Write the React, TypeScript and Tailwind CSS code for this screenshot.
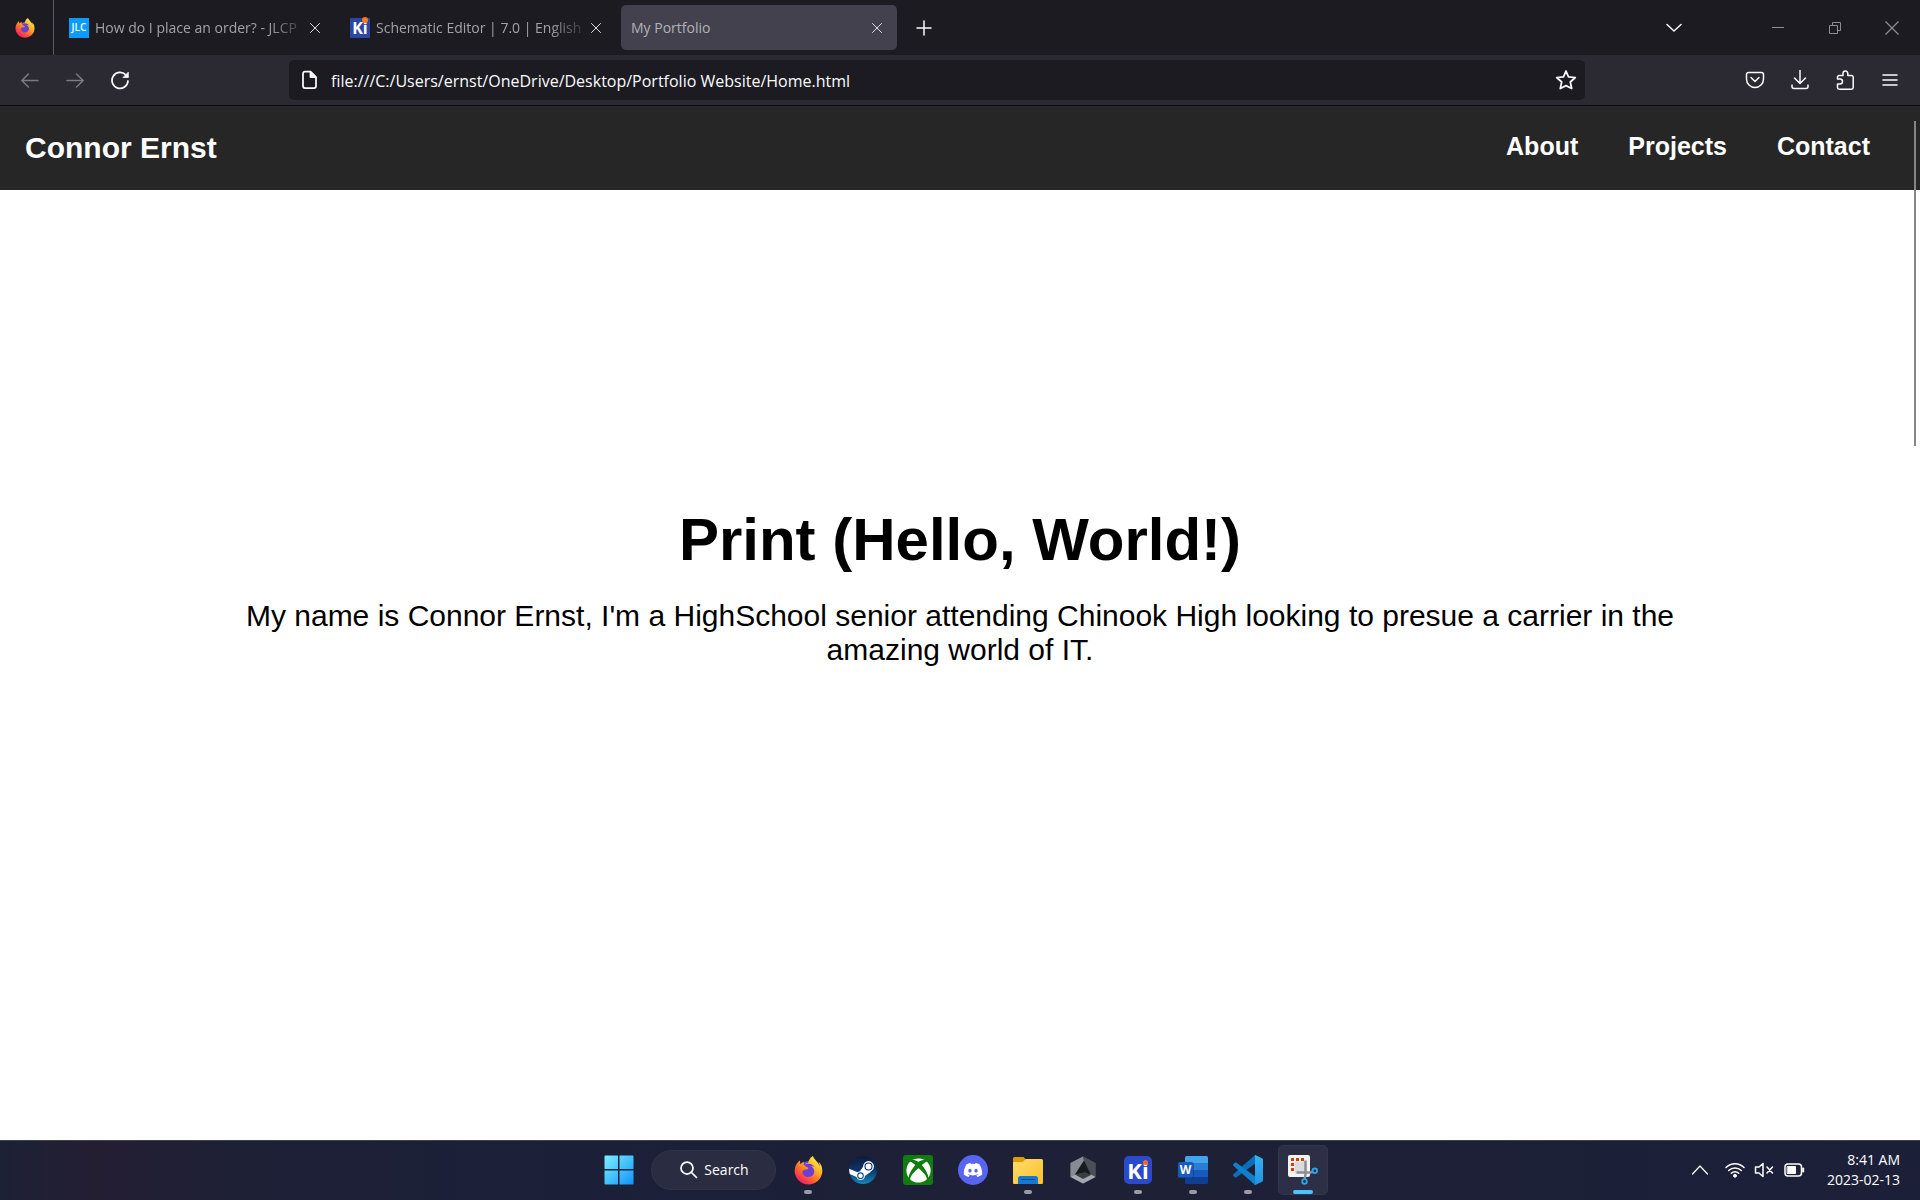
import type { ReactNode } from "react";
import { FaDiscord, FaFirefoxBrowser, FaXbox } from "react-icons/fa";

function Gradients() {
  return (
    <svg width="0" height="0" className="absolute" aria-hidden="true">
      <defs>
        <linearGradient id="flame" x1="0.85" y1="0.05" x2="0.2" y2="0.95">
          <stop offset="0" stopColor="#fff44f" />
          <stop offset="0.35" stopColor="#ffb42a" />
          <stop offset="0.65" stopColor="#ff6a2b" />
          <stop offset="1" stopColor="#f5156c" />
        </linearGradient>
        <linearGradient id="steamBlue" x1="0" y1="0" x2="0" y2="1">
          <stop offset="0" stopColor="#101a3a" />
          <stop offset="0.5" stopColor="#0b3568" />
          <stop offset="1" stopColor="#1387b8" />
        </linearGradient>
        <linearGradient id="winBlue" x1="0" y1="0" x2="1" y2="1">
          <stop offset="0" stopColor="#7bf0ff" />
          <stop offset="1" stopColor="#0f93fb" />
        </linearGradient>
        <linearGradient id="folderYellow" x1="0" y1="0" x2="1" y2="1">
          <stop offset="0" stopColor="#ffdc6b" />
          <stop offset="1" stopColor="#fbc02e" />
        </linearGradient>
        <linearGradient id="codeBlue" x1="0" y1="0" x2="0" y2="1">
          <stop offset="0" stopColor="#35b3f5" />
          <stop offset="1" stopColor="#1c93e3" />
        </linearGradient>
      </defs>
    </svg>
  );
}

function Firefox({ size }: { size: number }) {
  return (
    <span className="relative grid place-items-center">
      <span className="absolute size-3/5 rounded-full bg-[#6b3fd6]" />
      <FaFirefoxBrowser size={size} fill="url(#flame)" className="relative" />
    </span>
  );
}

function Line({ size = 20, width = 1.5, children }: { size?: number; width?: number; children: ReactNode }) {
  return (
    <svg
      width={size}
      height={size}
      viewBox={`0 0 ${size} ${size}`}
      fill="none"
      stroke="currentColor"
      strokeWidth={width}
      strokeLinecap="round"
      strokeLinejoin="round"
      aria-hidden="true"
    >
      {children}
    </svg>
  );
}

function Tab({ icon, title, active }: { icon?: ReactNode; title: string; active?: boolean }) {
  return (
    <div
      className={
        active
          ? "flex h-[45px] w-[276px] items-center rounded-[5px] bg-[#42414d] pl-2.5 pr-3.5 text-[#b2b1b8]"
          : "flex h-[45px] w-[276px] items-center pl-2.5 pr-3.5 text-[#a3a2a8]"
      }
    >
      <button className="flex min-w-0 flex-1 items-center gap-1.5 text-left text-sm">
        {icon}
        <span
          className={
            active
              ? "whitespace-nowrap"
              : "min-w-0 flex-1 overflow-hidden whitespace-nowrap [mask-image:linear-gradient(to_right,black_calc(100%-40px),transparent)]"
          }
        >
          {title}
        </span>
      </button>
      <button aria-label={`Close ${title}`} className="text-[#e0e0e4]">
        <Line size={12} width={1}>
          <path d="M1.5 1.5l9 9M10.5 1.5l-9 9" />
        </Line>
      </button>
    </div>
  );
}

function IconButton({ label, className, children }: { label: string; className?: string; children: ReactNode }) {
  return (
    <button aria-label={label} className={`grid h-10 w-[45px] place-items-center ${className ?? "text-[#fbfbfe]"}`}>
      {children}
    </button>
  );
}

function WindowButton({ label, children }: { label: string; children: ReactNode }) {
  return (
    <button aria-label={label} className="grid h-full w-[57px] place-items-center text-[#8e8d93]">
      {children}
    </button>
  );
}

function TabStrip() {
  return (
    <div className="flex h-[55px] items-center bg-[#1c1b22]">
      <button aria-label="Firefox View" className="grid h-full w-[54px] place-items-center border-r border-[#5b5b66] pr-1">
        <Firefox size={20} />
      </button>
      <div className="ml-[5px] flex gap-[5px]">
        <Tab
          title="How do I place an order? - JLCP"
          icon={
            <span className="grid size-5 shrink-0 place-items-center bg-[#0a9bff] text-[10px] font-semibold text-white">
              JLC
            </span>
          }
        />
        <Tab
          title="Schematic Editor | 7.0 | English"
          icon={
            <span className="relative grid size-5 shrink-0 place-items-center rounded-[1px] bg-[#2c46a5] text-base font-bold leading-5 text-white">
              Ki
              <span className="absolute -top-px right-0.5 size-1.5 rounded-full bg-[#f77c13]" />
            </span>
          }
        />
        <Tab title="My Portfolio" active />
      </div>
      <button aria-label="New tab" className="ml-3 grid h-10 w-[30px] place-items-center text-[#fbfbfe]">
        <Line size={16} width={1.5}>
          <path d="M8 1v14M1 8h14" />
        </Line>
      </button>
      <div className="ml-auto flex h-full items-center">
        <button aria-label="List all tabs" className="mr-[53px] grid h-10 w-[45px] place-items-center text-[#fbfbfe]">
          <Line size={16} width={1.5}>
            <path d="M1 4.500L8 11l7-6.500" />
          </Line>
        </button>
        <WindowButton label="Minimize">
          <svg width="12" height="12" aria-hidden="true">
            <path d="M0 5.5h12" stroke="currentColor" />
          </svg>
        </WindowButton>
        <WindowButton label="Restore">
          <svg width="12" height="12" fill="none" stroke="currentColor" aria-hidden="true">
            <path d="M.5 3.5h8v8h-8zM3.5 3.5v-3h8v8h-3" />
          </svg>
        </WindowButton>
        <WindowButton label="Close">
          <svg width="14" height="14" fill="none" stroke="currentColor" strokeWidth="1.2" aria-hidden="true">
            <path d="M.5 .5l13 13M13.5 .5l-13 13" />
          </svg>
        </WindowButton>
      </div>
    </div>
  );
}

function Toolbar() {
  return (
    <div className="flex h-[51px] items-center border-b border-[#0c0c0d] bg-[#2b2a33] pl-[7px] pr-2">
      <IconButton label="Back" className="text-[#7b7a82]">
        <Line>
          <path d="M18 10.500H2M8.500 4L1.800 10.500l6.700 6.500" />
        </Line>
      </IconButton>
      <IconButton label="Forward" className="text-[#7b7a82]">
        <Line>
          <path d="M2 10.500h16M11.500 4l6.700 6.500-6.700 6.500" />
        </Line>
      </IconButton>
      <IconButton label="Reload">
        <Line width={1.75}>
          <path d="M18 11a8 8 0 1 1-2.300-6.200l1.600 1.500" />
          <path d="M18.300 2.500v5h-5z" fill="currentColor" strokeWidth="0.8" />
        </Line>
      </IconButton>
      <div className="mx-[147px] flex h-10 min-w-0 flex-1 items-center rounded-[5px] bg-[#1c1b22] pl-[11px] pr-2 text-[#fbfbfe]">
        <Line width={1.75}>
          <path d="M5 1.500h5.500l5.500 5.500v9a2 2 0 0 1-2 2H5a2 2 0 0 1-2-2V3.500a2 2 0 0 1 2-2z" />
          <path d="M10.500 2v5h5z" fill="currentColor" />
        </Line>
        <input
          aria-label="Address"
          defaultValue="file:///C:/Users/ernst/OneDrive/Desktop/Portfolio Website/Home.html"
          className="ml-[11px] min-w-0 flex-1 bg-transparent pt-0.5 text-base outline-none"
        />
        <button aria-label="Bookmark this page">
          <Line size={22} width={1.75}>
            <path d="M11 2l2.500 5.800 6.800.7-5 4.500 1.400 6.500L11 16.600l-5.700 2.900 1.400-6.500-5-4.500 6.800-.7z" />
          </Line>
        </button>
      </div>
      <IconButton label="Save to Pocket">
        <Line width={1.5}>
          <path d="M3.500 2.500h13a2 2 0 0 1 2 2V9a8.500 8.500 0 0 1-17 0V4.500a2 2 0 0 1 2-2zM6 7.500l4 4 4-4" />
        </Line>
      </IconButton>
      <IconButton label="Downloads">
        <Line width={1.5}>
          <path d="M10 .5v13M4.500 8l5.500 5.500L15.500 8M2 15v1.500A2 2 0 0 0 4 18.500h12a2 2 0 0 0 2-2V15" />
        </Line>
      </IconButton>
      <IconButton label="Extensions">
        <Line width={1.5}>
          <path d="M2.500 9V7.200a1.700 1.700 0 0 1 1.700-1.700H8V3.400a2.400 2.400 0 0 1 4.800 0v2.100h3.700a1.700 1.700 0 0 1 1.700 1.700v10.300a1.700 1.700 0 0 1-1.700 1.700H4.200a1.700 1.700 0 0 1-1.700-1.700V14H5a2.500 2.500 0 0 0 0-5z" />
        </Line>
      </IconButton>
      <IconButton label="Menu">
        <Line size={16} width={1.5}>
          <path d="M1 3h14M1 8h14M1 13h14" />
        </Line>
      </IconButton>
    </div>
  );
}

function Page() {
  return (
    <div className="relative flex flex-1 flex-col bg-white font-['Liberation_Sans',Arial,sans-serif] text-black">
      <header className="flex items-start justify-between bg-[#262626] p-[25px] font-bold text-white">
        <a href="#home" className="text-[30px] leading-[34px]">
          Connor Ernst
        </a>
        <nav className="flex gap-[50px] pr-[25px] text-[25px] leading-[30px]">
          <a href="#about">About</a>
          <a href="#projects">Projects</a>
          <a href="#contact">Contact</a>
        </nav>
      </header>
      <main className="px-[10%] pt-[316px] text-center">
        <h1 className="text-[60px] font-bold leading-[68px]">Print (Hello, World!)</h1>
        <p className="mt-[25px] text-[30px] leading-[34px]">
          My name is Connor Ernst, I'm a HighSchool senior attending Chinook High looking to presue a carrier in the
          amazing world of IT.
        </p>
      </main>
      <div className="absolute right-1 top-[15px] h-[325px] w-0.5 bg-[#858585]" />
    </div>
  );
}

function TaskButton({
  label,
  running,
  active,
  children,
}: {
  label: string;
  running?: boolean;
  active?: boolean;
  children: ReactNode;
}) {
  return (
    <button
      aria-label={label}
      className={
        active
          ? "relative grid size-[50px] place-items-center rounded-[5px] border border-[#34364c] bg-[#2c2f46]"
          : "relative grid size-[50px] place-items-center"
      }
    >
      {children}
      {running && <span className="absolute bottom-px left-[21px] h-1 w-2 rounded-full bg-[#9a9ba6]" />}
      {active && <span className="absolute bottom-0 left-3.5 h-1 w-5 rounded-full bg-[#4cc2ff]" />}
    </button>
  );
}

function Taskbar() {
  return (
    <footer className="grid h-[60px] grid-cols-[1fr_auto_1fr] items-center border-t border-[#3c4048] bg-[linear-gradient(to_right,#1d2136,#241e33_5%,#1e2036_12%,#1b2038_30%,#1e2036_60%,#1b2038)] pb-px text-white">
      <div />
      <div className="flex items-center gap-[5px] pl-0.5">
        <TaskButton label="Start">
          <svg width="30" height="30" viewBox="0 0 30 30" aria-hidden="true">
            <path d="M.5 1.500a1 1 0 0 1 1-1H14V14H.5zM15.500 .5h13a1 1 0 0 1 1 1V14h-14zM.5 15.500H14v14H1.500a1 1 0 0 1-1-1zM15.500 15.500h14v13a1 1 0 0 1-1 1h-13z" fill="url(#winBlue)" />
          </svg>
        </TaskButton>
        <button className="mx-0.5 flex h-10 w-[125px] items-center justify-center gap-1.5 rounded-full border border-[#303349] bg-[#2a2d42] text-sm">
          <Line width={1.75}>
            <circle cx="9" cy="8" r="6" />
            <path d="M13.500 12.500l5 5" />
          </Line>
          Search
        </button>
        <TaskButton label="Firefox" running>
          <Firefox size={29} />
        </TaskButton>
        <TaskButton label="Steam">
          <svg width="28" height="28" viewBox="0 0 28 28" aria-hidden="true">
            <circle cx="14" cy="14" r="14" fill="url(#steamBlue)" />
            <path d="M.2 12.800L8.500 16.200a4 4 0 0 1 2.300-.7l3.800-5.400 7.300 5.600-6 4.200a4.300 4.300 0 0 1-8.400 1L.8 18A14 14 0 0 1 .2 12.800z" fill="#fff" />
            <circle cx="19.500" cy="10.500" r="5.400" fill="#fff" />
            <circle cx="19.500" cy="10.500" r="3.500" fill="none" stroke="#0d2c58" strokeWidth="1.100" />
            <circle cx="11.500" cy="19.700" r="2.800" fill="none" stroke="#0e4f83" strokeWidth="1.100" />
          </svg>
        </TaskButton>
        <TaskButton label="Xbox">
          <span className="grid size-[30px] place-items-center rounded-[3px] bg-[#107c10]">
            <FaXbox size={25} fill="#fff" />
          </span>
        </TaskButton>
        <TaskButton label="Discord">
          <span className="grid size-[30px] place-items-center rounded-full bg-[#5865f2]">
            <FaDiscord size={20} fill="#fff" />
          </span>
        </TaskButton>
        <TaskButton label="File Explorer" running>
          <svg width="30" height="28" viewBox="0 0 30 28" aria-hidden="true">
            <path d="M0 2.500A1.500 1.500 0 0 1 1.500 1h9L13.500 4H28v6H0z" fill="#dd9a05" />
            <path d="M0 6h9.500l3.500-3h15.500A1.500 1.500 0 0 1 30 4.500V27a1 1 0 0 1-1 1H1a1 1 0 0 1-1-1z" fill="url(#folderYellow)" />
            <path d="M5 28v-5.500A2.500 2.500 0 0 1 7.500 20h15a2.500 2.500 0 0 1 2.500 2.500V28z" fill="#1479d0" />
            <path d="M8.500 23.500h13" stroke="#0b4a8c" strokeWidth="1.200" />
          </svg>
        </TaskButton>
        <TaskButton label="Armoury Crate">
          <svg width="28" height="28" viewBox="0 0 28 28" aria-hidden="true">
            <path d="M14 .5L26.500 7v14L14 27.500 1.500 21V7z" fill="#565b61" />
            <path d="M14 .5L1.500 7v14L6 18.500 15 4.500z" fill="#868c93" />
            <path d="M14 .5L26.500 7v14L22 19 15 4.500z" fill="#4a4f55" />
            <path d="M14 27.500L1.500 21 6 18.500h16l4.500 2.500z" fill="#a3a9af" />
            <path d="M15 4.500L22 19l-6-2.500L6 18.500z" fill="#171b20" />
            <path d="M6 18.500l10-2 6 2.500-8 4z" fill="#3a3f45" />
          </svg>
        </TaskButton>
        <TaskButton label="KiCad" running>
          <span className="relative grid size-7 place-items-center rounded-[5px] bg-[#2b4acb] text-[22px] font-bold leading-7">
            Ki
            <span className="absolute right-1 top-1 size-[5px] rounded-full bg-[#ff6a13]" />
          </span>
        </TaskButton>
        <TaskButton label="Word" running>
          <span className="relative grid place-items-center">
            <svg width="30" height="28" viewBox="0 0 30 28" aria-hidden="true">
              <path d="M7 1.500A1.500 1.500 0 0 1 8.500 0h20A1.500 1.500 0 0 1 30 1.500V7H7z" fill="#41a5ee" />
              <path d="M7 7h23v7H7z" fill="#2b7cd3" />
              <path d="M7 14h23v7H7z" fill="#185abd" />
              <path d="M7 21h23v5.500a1.500 1.500 0 0 1-1.500 1.500h-20A1.500 1.500 0 0 1 7 26.500z" fill="#103f91" />
              <rect x="1" y="6.500" width="15" height="16" rx="1.500" fill="#0b3a80" opacity="0.5" />
              <rect x="0" y="6" width="15" height="15.500" rx="1.500" fill="#185abd" />
            </svg>
            <span className="absolute left-0 top-1.5 w-[15px] text-center text-[12px] font-bold leading-4">W</span>
          </span>
        </TaskButton>
        <TaskButton label="Visual Studio Code" running>
          <svg width="30" height="30" viewBox="0 0 30 30" aria-hidden="true">
            <path d="M22 0l1.500 7.500L3.500 22.300a1.200 1.200 0 0 1-1.600 0L.4 20.900a1.200 1.200 0 0 1 0-1.700z" fill="#0a6fb8" />
            <path d="M22 30l1.500-7.500L3.500 7.700a1.200 1.200 0 0 0-1.600 0L.4 9.100a1.200 1.200 0 0 0 0 1.700z" fill="#0e80cc" />
            <path d="M22.200 0L29 3.200a1.800 1.800 0 0 1 1 1.600v20.400a1.800 1.800 0 0 1-1 1.600L22.200 30c-.8 0-.2-.9-.2-1.300V1.300C22 .9 21.400 0 22.200 0z" fill="url(#codeBlue)" />
          </svg>
        </TaskButton>
        <TaskButton label="Snipping Tool" active>
          <svg width="30" height="30" viewBox="0 0 30 30" aria-hidden="true">
            <rect x="0" y="0" width="22" height="22" rx="2" fill="#f3f3f3" />
            <rect x="6.500" y="6.500" width="12" height="12" rx="1" fill="#d9dbdd" />
            <path d="M3 4.500h14" stroke="#d83b01" strokeWidth="3" strokeDasharray="3 2" />
            <path d="M4.500 8v9" stroke="#d83b01" strokeWidth="3" strokeDasharray="3 2" />
            <path d="M17.500 5.500v14l-1 5M8.500 17.500h14l3-1" stroke="#8b9096" strokeWidth="2.500" fill="none" />
            <circle cx="26.800" cy="15.800" r="2.300" fill="none" stroke="#28a8ea" strokeWidth="1.800" />
            <circle cx="16.500" cy="26.500" r="2.300" fill="none" stroke="#28a8ea" strokeWidth="1.800" />
          </svg>
        </TaskButton>
      </div>
      <div className="flex items-center justify-end pr-5">
        <button aria-label="Show hidden icons" className="mr-[17px]">
          <Line size={16} width={1.25}>
            <path d="M.5 12L8 4l7.500 8" />
          </Line>
        </button>
        <button aria-label="Network, volume and battery" className="flex items-center gap-[9px]">
          <Line width={1.500}>
            <path d="M1 7.500a12.700 12.700 0 0 1 18 0M3.700 10.500a9 9 0 0 1 12.600 0M6.300 13.300a5.200 5.200 0 0 1 7.400 0" />
            <circle cx="10" cy="15.700" r="1.500" fill="currentColor" strokeWidth="1" />
          </Line>
          <Line width={1.500}>
            <path d="M9 3.500v13L5 13H1.500V7H5zM13 7l5.500 6M18.500 7L13 13" />
          </Line>
          <Line size={22} width={1.500}>
            <rect x="2" y="5" width="16.500" height="12" rx="3" />
            <path d="M4.500 7.500h8v7h-8z" fill="currentColor" strokeWidth="1" />
            <path d="M20.200 9.500v3" strokeWidth="2" />
          </Line>
        </button>
        <button className="ml-[22px] text-right text-sm leading-5">
          8:41 AM
          <br />
          2023-02-13
        </button>
      </div>
    </footer>
  );
}

export default function App() {
  return (
    <div className="flex min-h-screen flex-col font-['Segoe_UI','Open_Sans',sans-serif]">
      <Gradients />
      <TabStrip />
      <Toolbar />
      <Page />
      <Taskbar />
    </div>
  );
}
